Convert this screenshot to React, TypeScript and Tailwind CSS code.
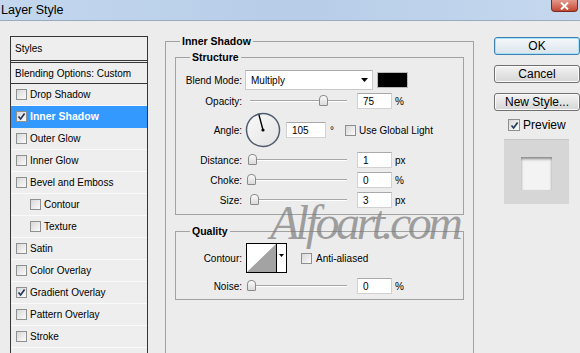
import React from 'react';

const Check = ({ checked, big }: { checked?: boolean; big?: boolean }) => (
  <span
    className={
      big
        ? 'flex h-[12px] w-[12px] shrink-0 items-center justify-center border border-[#8e8f8f] bg-gradient-to-br from-[#d8d8d8] to-[#fbfbfb]'
        : 'flex h-[11px] w-[11px] shrink-0 items-center justify-center border border-[#8e8f8f] bg-gradient-to-br from-[#d8d8d8] to-[#fbfbfb]'
    }
  >
    {checked && (
      <svg width="9" height="9" viewBox="0 0 9 9">
        <path d="M1.5 4.5 L3.6 7 L7.6 1.6" fill="none" stroke="#23375e" strokeWidth="1.7" />
      </svg>
    )}
  </span>
);

const Slider = ({ value }: { value: number }) => (
  <div className="relative ml-[5px] h-[16px] w-[103px] shrink-0">
    <div className="absolute left-[3px] right-[3px] top-[7px] h-[2px] border-t border-[#a6a6a6] bg-white" />
    <div
      className="absolute top-[2px] h-[11px] w-[9px] rounded-t-[4px] rounded-b-[1px] border border-[#8a8a8a] bg-gradient-to-b from-[#fbfbfb] to-[#dadada]"
      style={{ left: value * 0.96 }}
    />
  </div>
);

const Field = ({ value, w = 'w-[35px]' }: { value: string; w?: string }) => (
  <div className={`${w} flex h-[16px] shrink-0 items-center border border-[#d2d2d2] border-t-[#a9a9a9] bg-white pl-[5px]`}>
    {value}
  </div>
);

const Label = ({ children }: { children: React.ReactNode }) => (
  <span className="w-[66px] shrink-0 text-right">{children}</span>
);

const styles: { name: string; checked?: boolean; active?: boolean; sub?: boolean }[] = [
  { name: 'Drop Shadow' },
  { name: 'Inner Shadow', checked: true, active: true },
  { name: 'Outer Glow' },
  { name: 'Inner Glow' },
  { name: 'Bevel and Emboss' },
  { name: 'Contour', sub: true },
  { name: 'Texture', sub: true },
  { name: 'Satin' },
  { name: 'Color Overlay' },
  { name: 'Gradient Overlay', checked: true },
  { name: 'Pattern Overlay' },
  { name: 'Stroke' },
  { name: '' },
];

const SliderRow = ({ label, value, num, unit }: { label: string; value: number; num: string; unit: string }) => (
  <div className="flex h-[16px] items-center">
    <Label>{label}</Label>
    <Slider value={value} />
    <div className="ml-[7px]">
      <Field value={num} />
    </div>
    <span className="ml-[3px]">{unit}</span>
  </div>
);

export default function App() {
  return (
    <div className="relative flex h-[353px] w-[580px] flex-col overflow-hidden bg-[#ececec] font-['Liberation_Sans',Arial,sans-serif] text-[10px] text-black">
      {/* title bar */}
      <div className="flex h-[21px] shrink-0 items-start border-b border-[#9aabc0] bg-gradient-to-r from-[#c3d7ee] via-[#b7cde8] to-[#c5d8ee]">
        <span className="mt-[3px] pl-[1px] text-[12.5px] leading-[14px]">Layer Style</span>
        <div className="ml-auto mr-[2px] flex h-[12px] w-[27px] items-center justify-center rounded-b-[4px] border border-t-0 border-[#7a2a22] bg-gradient-to-b from-[#e3988b] to-[#c4452f]">
          <svg width="9" height="8" viewBox="0 0 9 8">
            <path d="M1 0.5 L8 7.5 M8 0.5 L1 7.5" stroke="white" strokeWidth="2" />
          </svg>
        </div>
      </div>

      <div className="flex flex-1 items-start">
        {/* styles list */}
        <div className="ml-[10px] mt-[15px] w-[138px] shrink-0 border border-[#363636] bg-[#eeeeee]">
          <div className="flex h-[26px] items-center border-b-[3px] border-double border-[#363636] pl-[4px]">Styles</div>
          <div className="flex h-[21px] items-center border-b border-[#363636] pl-[4px]">Blending Options: Custom</div>
          {styles.map((s, i) => (
            <div
              key={i}
              className={`flex h-[22px] items-center gap-[3px] border-b ${
                s.active ? 'border-[#3399ff] bg-[#3399ff] font-bold text-[10.5px] text-white' : 'border-[#fafafa]'
              } ${s.sub ? 'pl-[19px]' : 'pl-[5px]'}`}
            >
              {s.name && <Check checked={s.checked} />}
              <span>{s.name}</span>
            </div>
          ))}
        </div>

        {/* main panel */}
        <fieldset className="ml-[17px] mt-[14px] h-[340px] w-[309px] shrink-0 border border-[#a2a2a2] px-[9px]">
          <legend className="ml-[5px] px-[2px] text-[10.5px] font-bold leading-[13px]">Inner Shadow</legend>

          <fieldset className="mt-[3px] border border-[#a2a2a2] pb-[6px] pt-[6px]">
            <legend className="ml-[14px] px-[2px] text-[10.5px] font-bold leading-[13px]">Structure</legend>

            <div className="flex h-[20px] items-center">
              <Label>Blend Mode:</Label>
              <div className="ml-[3px] flex h-[20px] w-[128px] items-center justify-between border border-[#c9c9c9] border-t-[#a9a9a9] bg-white pl-[5px] pr-[4px]">
                <span>Multiply</span>
                <svg width="7" height="4" viewBox="0 0 7 4">
                  <path d="M0 0 H7 L3.5 4 Z" fill="#000" />
                </svg>
              </div>
              <div className="ml-[4px] h-[16px] w-[31px] border border-[#b9b9b9] bg-black" />
            </div>

            <div className="mt-[3px]">
              <SliderRow label="Opacity:" value={75} num="75" unit="%" />
            </div>

            <div className="mt-[3px] flex h-[36px] items-center">
              <Label>Angle:</Label>
              <svg className="ml-[3px]" width="36" height="36" viewBox="0 0 36 36">
                <defs>
                  <linearGradient id="dial" x1="0" y1="0" x2="1" y2="1">
                    <stop offset="0" stopColor="#fafafa" />
                    <stop offset="1" stopColor="#e2e2e2" />
                  </linearGradient>
                </defs>
                <circle cx="18" cy="18" r="16.5" fill="url(#dial)" stroke="#4f5c70" strokeWidth="1.5" />
                <line x1="18" y1="18" x2="13.9" y2="2.6" stroke="#000" strokeWidth="1.4" />
                <circle cx="18" cy="18" r="1.6" fill="#000" />
              </svg>
              <div className="ml-[5px]">
                <Field value="105" w="w-[40px]" />
              </div>
              <span className="ml-[4px] self-start pt-[11px]">°</span>
              <div className="ml-[11px] flex items-center gap-[3px]">
                <Check />
                <span>Use Global Light</span>
              </div>
            </div>

            <div className="mt-[4px]">
              <SliderRow label="Distance:" value={1} num="1" unit="px" />
            </div>
            <div className="mt-[4px]">
              <SliderRow label="Choke:" value={0} num="0" unit="%" />
            </div>
            <div className="mt-[4px]">
              <SliderRow label="Size:" value={3} num="3" unit="px" />
            </div>
          </fieldset>

          <fieldset className="mt-[10px] border border-[#a2a2a2] pb-[5px] pt-[5px]">
            <legend className="ml-[14px] px-[2px] text-[10.5px] font-bold leading-[13px]">Quality</legend>

            <div className="flex h-[30px] items-center">
              <Label>Contour:</Label>
              <div className="ml-[4px] flex h-[30px] w-[41px] border border-black bg-white">
                <svg width="29" height="28" viewBox="0 0 29 28">
                  <path d="M0 28 L29 0 L29 28 Z" fill="#a3a3a3" />
                </svg>
                <div className="flex flex-1 justify-center border-l border-black pt-[10px]">
                  <svg width="5" height="3" viewBox="0 0 5 3">
                    <path d="M0 0 H5 L2.5 3 Z" fill="#000" />
                  </svg>
                </div>
              </div>
              <div className="ml-[14px] flex items-center gap-[4px] self-start pt-[8px]">
                <Check />
                <span>Anti-aliased</span>
              </div>
            </div>

            <div className="mt-[5px]">
              <SliderRow label="Noise:" value={0} num="0" unit="%" />
            </div>
          </fieldset>
        </fieldset>

        {/* buttons */}
        <div className="ml-[20px] mt-[16px] flex w-[86px] shrink-0 flex-col text-[12px]">
          <button className="flex h-[18px] items-center justify-center rounded-[3px] border border-[#3c7fb1] bg-gradient-to-b from-[#f4f8fb] to-[#dbe3ea] shadow-[inset_0_0_0_1px_#a6e3f8]">
            OK
          </button>
          <button className="mt-[10px] flex h-[18px] items-center justify-center rounded-[3px] border border-[#707070] bg-gradient-to-b from-[#f3f3f3] to-[#d6d6d6] shadow-[inset_0_0_0_1px_#fbfbfb]">
            Cancel
          </button>
          <button className="mt-[10px] flex h-[18px] items-center justify-center rounded-[3px] border border-[#707070] bg-gradient-to-b from-[#f3f3f3] to-[#d6d6d6] shadow-[inset_0_0_0_1px_#fbfbfb]">
            New Style...
          </button>
          <div className="ml-[14px] mt-[8px] flex h-[12px] items-center gap-[3px]">
            <Check checked big />
            <span>Preview</span>
          </div>
          <div className="ml-[10px] mt-[8px] h-[65px] w-[65px] border-t border-[#c6c6c6] bg-[#d6d6d6] pl-[17px] pt-[17px]">
            <div className="h-[33px] w-[31px] bg-[#f3f3f3] shadow-[inset_0_2px_3px_rgba(0,0,0,0.45)]" />
          </div>
        </div>
      </div>

      {/* watermark */}
      <div className="pointer-events-none absolute left-[270px] top-[199px] font-['Liberation_Serif',serif] text-[48px] italic leading-none tracking-[-3.5px] text-[#7a7a7a]/70">
        Alfoart.com
      </div>
    </div>
  );
}
